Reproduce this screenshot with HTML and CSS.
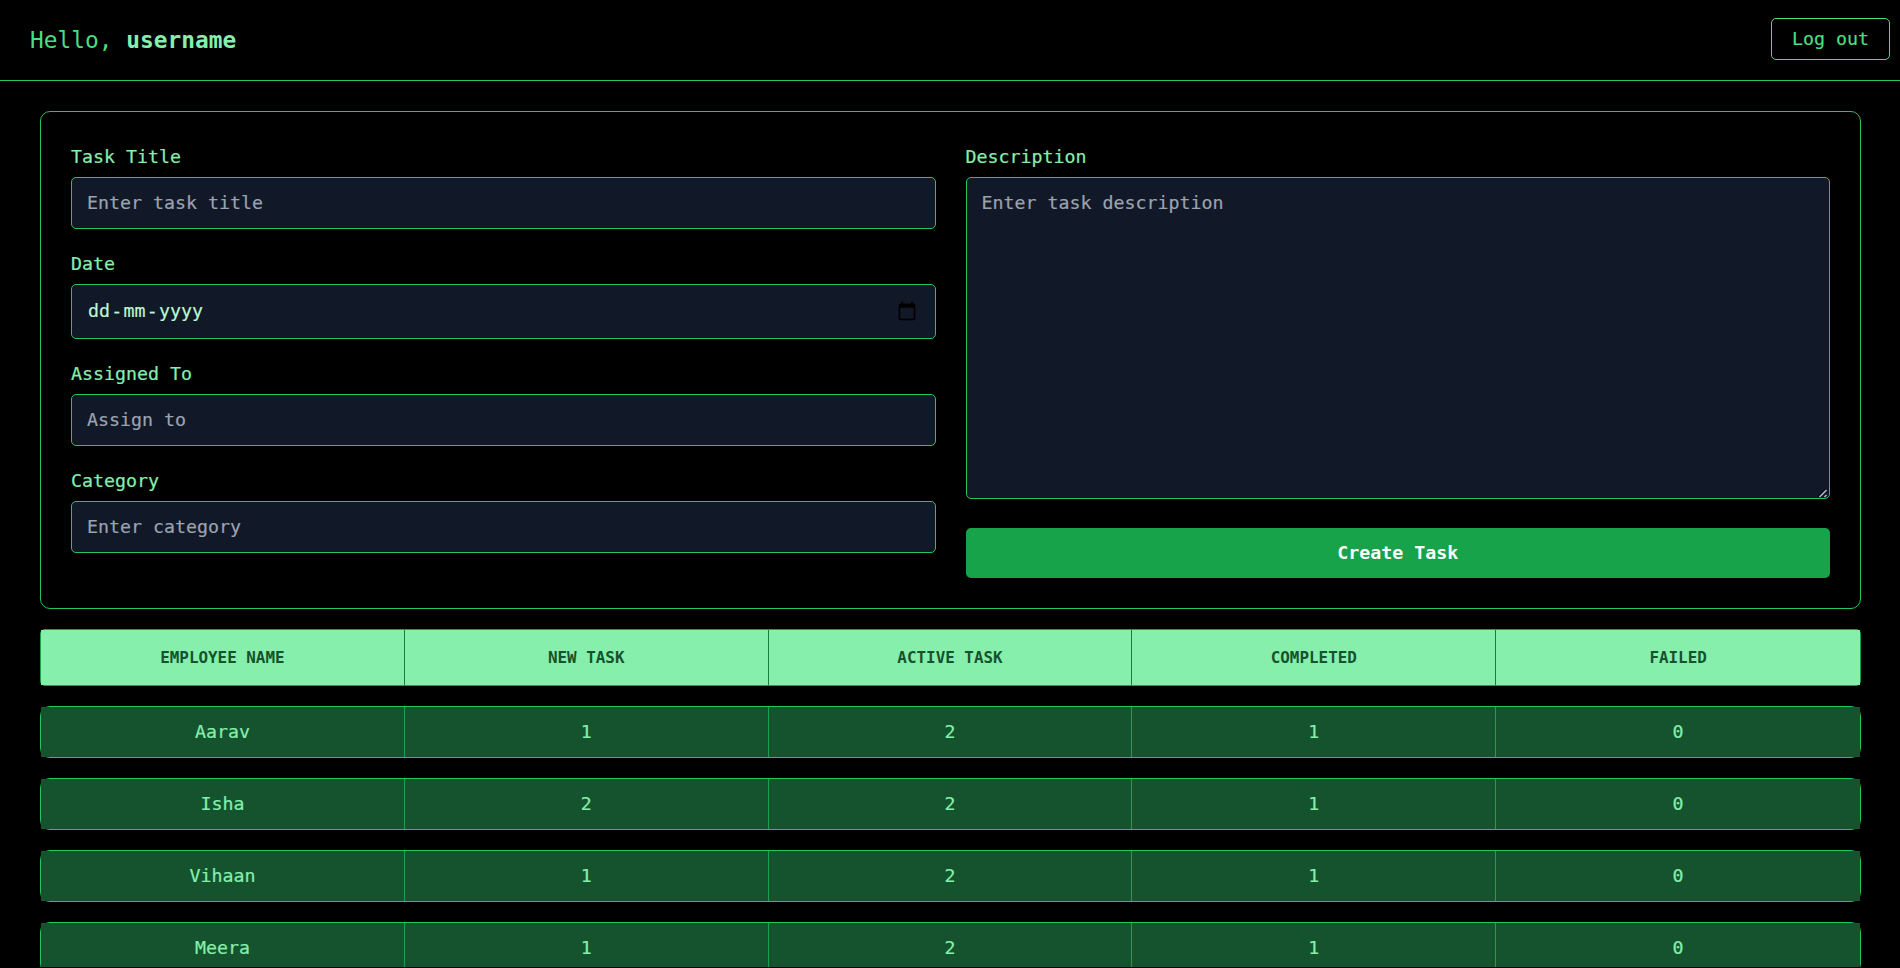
FILE: index.html
```html
<!DOCTYPE html>
<html lang="en">
<head>
<meta charset="utf-8">
<title>Admin Dashboard</title>
<link rel="stylesheet" href="styles.css">
</head>
<body>
<div class="page">
  <header class="topbar">
    <h1 class="greeting">Hello, <strong>username</strong></h1>
    <button class="logout" type="button">Log out</button>
  </header>
  <main class="main">
    <form class="card">
      <div class="column">
        <div class="field">
          <label class="label" for="title">Task Title</label>
          <input class="input" id="title" type="text" placeholder="Enter task title">
        </div>
        <div class="field">
          <span class="label">Date</span>
          <div class="input date">
            <div class="date-parts"><span>dd</span><span>-</span><span>mm</span><span>-</span><span>yyyy</span></div>
            <svg class="calendar" viewBox="0 0 24 24"><path d="M20 3h-1V1h-2v2H7V1H5v2H4c-1.100 0-2 .9-2 2v16c0 1.100.9 2 2 2h16c1.100 0 2-.9 2-2V5c0-1.100-.9-2-2-2zm0 18H4V8h16v13z"/></svg>
          </div>
        </div>
        <div class="field">
          <label class="label" for="assignee">Assigned To</label>
          <input class="input" id="assignee" type="text" placeholder="Assign to">
        </div>
        <div class="field">
          <label class="label" for="category">Category</label>
          <input class="input" id="category" type="text" placeholder="Enter category">
        </div>
      </div>
      <div class="column column-wide-gap">
        <div class="field textarea-field">
          <label class="label" for="description">Description</label>
          <textarea class="input textarea" id="description" placeholder="Enter task description"></textarea>
          <svg class="grip" viewBox="0 0 10 10"><path class="grip-shadow" d="M.5 8.500L7.500 1.500"/><path class="grip-line" d="M1.500 9L8.500 2M6.500 9L8.500 7"/></svg>
        </div>
        <button class="create" type="button">Create Task</button>
      </div>
    </form>
    <section class="table">
      <div class="row head"><div class="cell">EMPLOYEE NAME</div><div class="cell">NEW TASK</div><div class="cell">ACTIVE TASK</div><div class="cell">COMPLETED</div><div class="cell">FAILED</div></div>
      <div class="row"><div class="cell">Aarav</div><div class="cell">1</div><div class="cell">2</div><div class="cell">1</div><div class="cell">0</div></div>
      <div class="row"><div class="cell">Isha</div><div class="cell">2</div><div class="cell">2</div><div class="cell">1</div><div class="cell">0</div></div>
      <div class="row"><div class="cell">Vihaan</div><div class="cell">1</div><div class="cell">2</div><div class="cell">1</div><div class="cell">0</div></div>
      <div class="row"><div class="cell">Meera</div><div class="cell">1</div><div class="cell">2</div><div class="cell">1</div><div class="cell">0</div></div>
    </section>
  </main>
</div>
</body>
</html>
```
FILE: styles.css
```css
*, *::before, *::after { box-sizing: border-box; }

html { background: #000; }

body {
  margin: 0;
  overflow: hidden;
  background: #000;
  color: #86efac;
  font-family: Consolas, "DejaVu Sans Mono", monospace;
  font-size: 18.27px;
  line-height: 30px;
  -webkit-text-stroke: 0.2px;
}

button, input, textarea { font: inherit; margin: 0; }

.page { height: 967px; overflow: hidden; }

.topbar {
  display: flex;
  align-items: center;
  justify-content: space-between;
  height: 81px;
  padding: 0 10px 0 30px;
  border-bottom: 1px solid #22c55e;
}

.greeting {
  margin: 0;
  color: #4ade80;
  font-size: 22.84px;
  font-weight: 400;
  -webkit-text-stroke: 0;
}

.greeting strong { color: #86efac; font-weight: 700; }

.logout {
  width: 119px;
  height: 42px;
  margin-bottom: 2px;
  padding: 0;
  border: 1px solid #4ade80;
  border-radius: 5px;
  background: transparent;
  color: #4ade80;
}

.main { padding: 30px 39px 0 40px; }

.card {
  display: grid;
  grid-template-columns: 1fr 1fr;
  gap: 30px;
  height: 498px;
  padding: 30px;
  border: 1px solid #22c55e;
  border-radius: 10px;
}

.column { display: flex; flex-direction: column; gap: 20px; min-width: 0; }

.column-wide-gap { gap: 29px; }

.field { display: flex; flex-direction: column; gap: 5px; }

.label { display: block; height: 30px; color: #86efac; }

.input {
  width: 100%;
  height: 52px;
  padding: 9px 15px 11px;
  border: 1px solid #22c55e;
  border-radius: 5px;
  background: #111827;
  color: #bbf7d0;
  outline: none;
}

.input::placeholder { color: #9ca3af; opacity: 1; }

.date {
  display: flex;
  align-items: center;
  justify-content: space-between;
  height: 55px;
  padding: 0 18px 1px 16px;
}

.date-parts { display: flex; gap: 1.25px; }

.calendar { width: 20px; height: 20px; margin-top: -1px; fill: #000; }

.textarea-field { position: relative; }

.textarea { display: block; height: 322px; padding: 10px 15px; resize: none; }

/* Resize handle in the textarea's corner */
.grip {
  position: absolute;
  right: 2px;
  bottom: 1px;
  width: 10px;
  height: 10px;
  fill: none;
}

.grip-shadow { stroke: #000; stroke-width: 1.5; }

.grip-line { stroke: #b4b8c0; stroke-width: 1.6; }

.create {
  height: 50px;
  padding: 0;
  border: 0;
  border-radius: 5px;
  background: #16a34a;
  color: #fff;
  font-weight: 700;
  -webkit-text-stroke: 0;
}

.table { display: flex; flex-direction: column; gap: 20px; margin-top: 20px; }

.row {
  display: grid;
  grid-template-columns: repeat(5, 1fr);
  height: 52px;
  border: 1px solid #22c55e;
  border-radius: 10px;
}

.cell {
  display: flex;
  align-items: center;
  justify-content: center;
  border-right: 1px solid #16a34a;
  background: #14532d;
}

.cell:last-child { border-right: 0; }

.head {
  height: 57px;
  border-color: #16a34a;
  border-radius: 5px;
  color: #14532d;
  font-size: 15.9px;
  font-weight: 700;
  -webkit-text-stroke: 0;
}

.head .cell { border-color: #15803d; background: #86efac; }
```
